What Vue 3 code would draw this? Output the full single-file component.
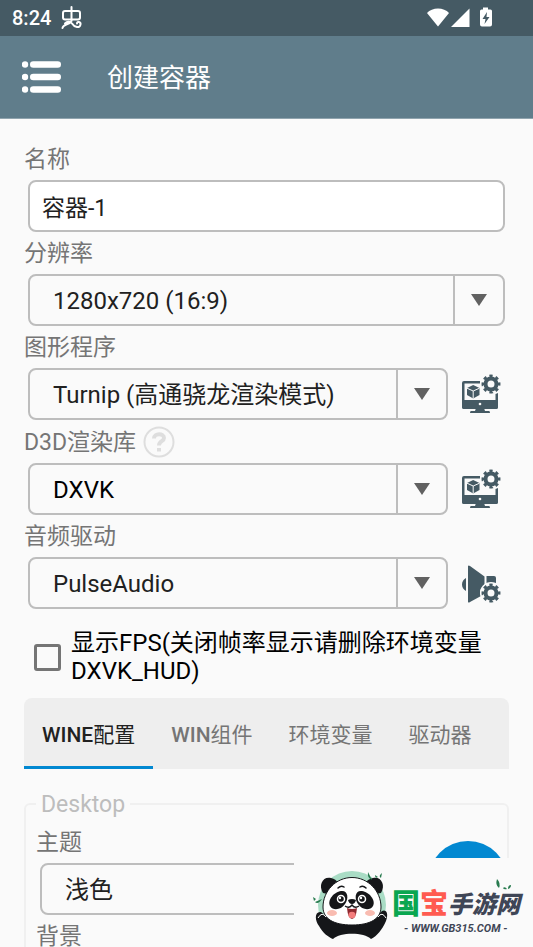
<script setup>
import { reactive, ref } from 'vue'

const name = ref('容器-1')
const showFps = ref(false)
const theme = ref('浅色')
const activeTab = ref(0)
const tabs = [
  { latin: 'WINE', text: '配置' },
  { latin: 'WIN', text: '组件' },
  { latin: '', text: '环境变量' },
  { latin: '', text: '驱动器' },
]

const fields = reactive([
  { id: 'resolution', label: '分辨率', value: '1280x720 (16:9)', options: ['1280x720 (16:9)'] },
  { id: 'graphics', label: '图形程序', value: 'Turnip (高通骁龙渲染模式)', options: ['Turnip (高通骁龙渲染模式)'], action: 'display' },
  { id: 'd3d', label: 'D3D渲染库', value: 'DXVK', options: ['DXVK'], action: 'display', help: true, strong: true },
  { id: 'audio', label: '音频驱动', value: 'PulseAudio', options: ['PulseAudio'], action: 'sound' },
])
</script>

<template>
  <div class="app">
    <div class="status">
      <span class="clock">8:24</span>
      <svg class="bug" width="22" height="24" viewBox="0 0 22 24" aria-hidden="true">
        <rect x="2" y="5" width="17" height="8.500" rx="2" />
        <path d="M10.500 1V15M4 17.500C6 15.500 9 15 11 17.500C13.500 21.500 19 22.500 19.500 18.500C20 15.500 16 15 16 17.500M10.500 15C8 19.500 2 18 1.500 22" />
      </svg>
      <svg class="signals" width="68" height="24" viewBox="0 0 68 24" aria-hidden="true">
        <path d="M2 7C7 1 19 1 24 7L13 20.500Z" />
        <path d="M44.500 2.500V21H26Z" />
        <path fill-rule="evenodd" d="M58 1.500H63V3.500H65.500Q67 3.500 67 5V18.500Q67 20.500 65 20.500H57Q55 20.500 55 18.500V5Q55 3.500 56.500 3.500H58ZM62 6L57.500 13H60.500L59.500 18L64.500 11H61.500Z" />
      </svg>
    </div>
    <header class="bar">
      <button class="menu" type="button" aria-label="菜单">
        <svg width="40" height="34" viewBox="0 0 40 34">
          <g v-for="y in [4.5, 17, 29.5]" :key="y">
            <circle cx="3" :cy="y" r="3.200" />
            <rect x="8" :y="y - 3.3" width="31" height="6.600" rx="3.300" />
          </g>
        </svg>
      </button>
      <h1>创建容器</h1>
    </header>

    <main>
      <div class="field">
        <div class="caption"><label for="name">名称</label></div>
        <div class="row"><input id="name" v-model="name" class="box text" type="text" /></div>
      </div>

      <div v-for="f in fields" :key="f.id" class="field">
        <div class="caption">
          <label :for="f.id">{{ f.label }}</label>
          <button v-if="f.help" class="help" type="button" aria-label="帮助">
            <svg width="32" height="32" viewBox="0 0 32 32">
              <circle cx="16" cy="16" r="14.500" />
              <path d="M11 12.500C11 7 21 7 21 12C21 15.500 16 15 16 19.500M16 22V25.500" />
            </svg>
          </button>
        </div>
        <div class="row">
          <div class="box drop">
            <select :id="f.id" v-model="f.value" :class="{ strong: f.strong }">
              <option v-for="o in f.options" :key="o">{{ o }}</option>
            </select>
            <span class="arrow"><svg width="16" height="12" viewBox="0 0 16 12"><path d="M0 0H16L8 12Z" /></svg></span>
          </div>
          <button v-if="f.action" class="tool" type="button" :aria-label="f.label + ' 设置'">
            <svg width="40" height="40" viewBox="0 0 40 40">
              <template v-if="f.action === 'display'">
                <path d="M2 7H18V9.500H2.500V26H33.500V20L36 19V33Q36 35 34 35H2Q0 35 0 33V9Q0 7 2 7Z" />
                <path d="M0 26H36V33Q36 35 34 35H2Q0 35 0 33Z" />
                <path d="M14 34H22L23 37H27Q28 37 28 39H8Q8 37 9 37H13Z" />
                <circle class="light" cx="18" cy="30" r="1.300" />
                <path d="M11.200 11L17.500 14V21L11.200 24.500L5 21V14Z" />
                <path class="edge" d="M5 14.200L11.200 17L17.500 14.200M11.200 17V24.500" />
                <g class="gear" transform="translate(29 10)">
                  <circle class="ring" r="5.500" />
                  <circle class="teeth" r="8" pathLength="16" transform="rotate(-11.25)" />
                </g>
              </template>
              <template v-else>
                <path d="M4 15V28C-1.300 25.500 -1.300 17.500 4 15Z" />
                <path d="M6 3Q6.500 2 8 3L22.500 13.500V22C18 25 17 29 19 33L8 39Q6.500 40 6 39Z" />
                <path d="M24.500 13H32Q34 13 34 15V21.500L24.500 20Z" />
                <circle class="halo" cx="29" cy="30" r="11" />
                <g class="gear" transform="translate(29 30)">
                  <circle class="ring" r="5.500" />
                  <circle class="teeth" r="8" pathLength="16" transform="rotate(-11.25)" />
                </g>
              </template>
            </svg>
          </button>
        </div>
      </div>

      <label class="check">
        <input v-model="showFps" type="checkbox" />
        <span>显示FPS(关闭帧率显示请删除环境变量DXVK_HUD)</span>
      </label>

      <nav class="tabs" role="tablist">
        <button v-for="(t, i) in tabs" :key="t.text" type="button" role="tab" :aria-selected="i === activeTab" :class="{ active: i === activeTab }" @click="activeTab = i"><b v-if="t.latin">{{ t.latin }}</b>{{ t.text }}</button>
      </nav>

      <fieldset>
        <legend>Desktop</legend>
        <div class="caption"><label for="theme">主题</label></div>
        <div class="row">
          <div class="box drop">
            <select id="theme" v-model="theme"><option>浅色</option></select>
            <span class="arrow"><svg width="16" height="12" viewBox="0 0 16 12"><path d="M0 0H16L8 12Z" /></svg></span>
          </div>
        </div>
        <div class="caption"><span>背景</span></div>
      </fieldset>
    </main>

    <button class="fab" type="button" aria-label="保存"></button>

    <aside class="brand">
      <svg class="panda" width="76" height="76" viewBox="0 0 76 76" aria-hidden="true">
        <circle cx="38" cy="36" r="34" fill="#a9dcc5" />
        <path d="M7 43C0 42 1 52 5 57C9 64 14 68 19 70H57C63 67 68 61 72 52C75 44 72 40 68 42L60 50H16Z" fill="#151619" />
        <path d="M19 70C26 63 50 63 57 70Z" fill="#fafafa" />
        <path d="M9 24C4 16 9 7 17 9Q22 10 24 14L14 25Z" fill="#151619" />
        <path d="M67 24C72 16 67 7 59 9Q54 10 51 14L61 25Z" fill="#151619" />
        <path d="M38 8.500C54 8.500 67 22 67 38C67 50 56 56 38 56C20 56 9 50 9 38C9 22 22 8.500 38 8.500Z" fill="#fff" stroke="#151619" stroke-width="1" />
        <path d="M27 22C34 21 35 29 31 35C27 41 19 42 16 37C13 31 20 23 27 22Z" fill="#151619" />
        <path d="M48 22C41 21 40 29 44 35C48 41 56 42 59 37C62 31 55 23 48 22Z" fill="#151619" />
        <g fill="#151619" stroke="#fff" stroke-width="1.500">
          <circle cx="27" cy="30" r="3.500" />
          <circle cx="48" cy="30" r="3.500" />
        </g>
        <g fill="#fff"><circle cx="26" cy="29" r="1.200" /><circle cx="47" cy="29" r="1.200" /></g>
        <path d="M24 19Q27 16 30 18M46 18Q49 16 52 19" fill="none" stroke="#151619" stroke-width="1.500" stroke-linecap="round" />
        <path d="M34 31Q38 29 42 31Q41 35 38 35Q35 35 34 31Z" fill="#151619" />
        <path d="M31 37Q35 40 38 36Q41 40 45 37" fill="none" stroke="#151619" stroke-width="1.300" />
        <path d="M33 39Q38 41 43 39Q42 50 38 50Q34 50 33 39Z" fill="#8f2930" />
        <ellipse cx="38" cy="46" rx="3.500" ry="3.300" fill="#f47d7d" />
        <ellipse cx="18" cy="44" rx="5" ry="3" fill="#f9bcb1" />
        <ellipse cx="56" cy="44" rx="5" ry="3" fill="#f9bcb1" />
        <path d="M4 49Q8 42 12 48M64 48Q68 42 72 49" fill="none" stroke="#fff" stroke-width="1" />
        <path d="M54 3L58 11Q53 9 54 3ZM68 4L67 9Q64 7 68 4ZM8 30L1 33Q4 36 8 30ZM64 8L61 6Q61 10 64 8ZM2 30L-1 28L0 32Z" fill="#287b4f" />
      </svg>
      <div class="words">
        <svg class="leaves" width="18" height="12" viewBox="0 0 18 12" aria-hidden="true">
          <path d="M2 0Q6 4 4 9Q0 6 2 0ZM8 9Q10 7 12 10Q9 11 8 9ZM16 6Q13 6 13 10Q16 9 16 6Z" fill="#287b4f" />
        </svg>
        <div class="title"><b class="green">国</b><b class="red">宝</b><i>手游网</i></div>
        <div class="site">- WWW.GB315.COM -</div>
      </div>
    </aside>
  </div>
</template>

<style>
body { background: #fafafa; }
</style>

<style scoped>
* { box-sizing: border-box; }
.app {
  height: 100vh;
  overflow: hidden;
  display: flex;
  flex-direction: column;
  background: #fafafa;
  color: #212121;
  font-family: Roboto, "Noto Sans CJK SC", sans-serif;
  font-size: 23px;
}
button { border: 0; padding: 0; background: none; font: inherit; color: inherit; }
svg { display: block; }
.status {
  flex: none;
  height: 36px;
  padding: 0 40px 0 12px;
  display: flex;
  align-items: center;
  background: #455a64;
  color: #fff;
}
.clock { font-size: 20px; font-weight: 500; line-height: 38px; }
.bug { margin-left: 10px; fill: none; stroke: #fff; stroke-width: 2; stroke-linecap: round; }
.signals { margin-left: auto; fill: #fff; }
.bar {
  flex: none;
  height: 83px;
  padding: 0 22px;
  display: flex;
  align-items: center;
  gap: 45px;
  background: #607d8b;
  border-bottom: 1px solid #90a4ae;
  color: #fff;
}
.menu svg { fill: #fff; }
h1 { margin: 0; padding-top: 2px; font-size: 26px; font-weight: 400; line-height: 36px; }
main { flex: 1; min-height: 0; overflow: hidden; padding: 19px 24px 0; }
.caption {
  min-height: 42px;
  padding-top: 2px;
  display: flex;
  align-items: center;
  gap: 7px;
  color: #757575;
  line-height: 28px;
}
.help { padding: 4px 0 5px; }
.help svg { fill: none; stroke: #dedede; stroke-width: 2; }
.help path { stroke-width: 4; }
.row { display: flex; align-items: center; gap: 14px; padding: 0 4px; }
.box {
  flex: 1;
  min-width: 0;
  height: 52px;
  border: 2px solid #bdbdbd;
  border-radius: 8px;
  background: #fafafa;
}
.text { padding: 0 12px; background: #fff; font: inherit; color: inherit; outline: 0; }
.drop { display: flex; }
select {
  flex: 1;
  min-width: 0;
  appearance: none;
  border: 0;
  padding: 2px 0 0 23px;
  background: none;
  font: inherit;
  font-size: 24px;
  color: inherit;
  outline: 0;
}
.strong { color: #000; }
.arrow {
  width: 50px;
  display: flex;
  align-items: center;
  justify-content: center;
  border-left: 2px solid #bdbdbd;
  fill: #616161;
}
.tool { width: 43px; fill: #455a64; }
.tool svg { overflow: visible; }
.light { fill: #fafafa; }
.edge { fill: none; stroke: #fafafa; stroke-width: 1; }
.halo { fill: #fafafa; }
.gear { fill: none; stroke: #455a64; }
.ring { stroke-width: 4; }
.teeth { stroke-width: 3; stroke-dasharray: 1 1; }
.check {
  display: flex;
  align-items: center;
  gap: 10px;
  padding: 20px 0 13px 10px;
  color: #000;
  font-size: 24px;
  line-height: 28px;
}
.check input {
  flex: none;
  appearance: none;
  width: 27px;
  height: 27px;
  margin: 0;
  border: 3px solid #757575;
  border-radius: 3px;
}
.check input:checked { background: #0288d1; }
.tabs {
  height: 71px;
  display: flex;
  background: #eee;
  border-radius: 8px 8px 0 0;
  color: #757575;
  font-size: 21px;
}
.tabs button { padding: 2px 18px 0; border-bottom: 3px solid transparent; white-space: nowrap; }
.tabs b { font-weight: 500; }
.tabs .active { color: #212121; border-color: #0288d1; }
fieldset {
  min-width: 0;
  margin: 19px 0 0;
  padding: 2px 10px 40px;
  border: 2px solid #f0f0f0;
  border-radius: 6px;
}
legend { padding: 3px 5px 0; color: #bdbdbd; line-height: 28px; }
.fab {
  position: fixed;
  right: 25px;
  bottom: 26px;
  width: 80px;
  height: 80px;
  border-radius: 50%;
  background: #0288d1;
}
.brand {
  position: fixed;
  right: 0;
  bottom: 0;
  width: 239px;
  height: 89px;
  padding: 11px 11px 0 20px;
  display: flex;
  gap: 2px;
  background: #fafafa;
}
.panda { flex: none; overflow: visible; }
.words { position: relative; flex: 1; padding-top: 14px; }
.leaves { position: absolute; right: 9px; top: 10px; }
.title {
  display: flex;
  align-items: center;
  height: 38px;
  font-family: "Noto Sans CJK SC", sans-serif;
  font-weight: 900;
  white-space: nowrap;
}
.title b { font-size: 28px; font-weight: 900; }
.title i { font-size: 24px; color: #3f4656; }
.green { color: #0aa650; }
.red { color: #ff5b50; }
.site {
  padding-left: 12px;
  font-size: 11px;
  font-weight: 700;
  font-style: italic;
  line-height: 16px;
  color: #3f4656;
  white-space: nowrap;
}
</style>
